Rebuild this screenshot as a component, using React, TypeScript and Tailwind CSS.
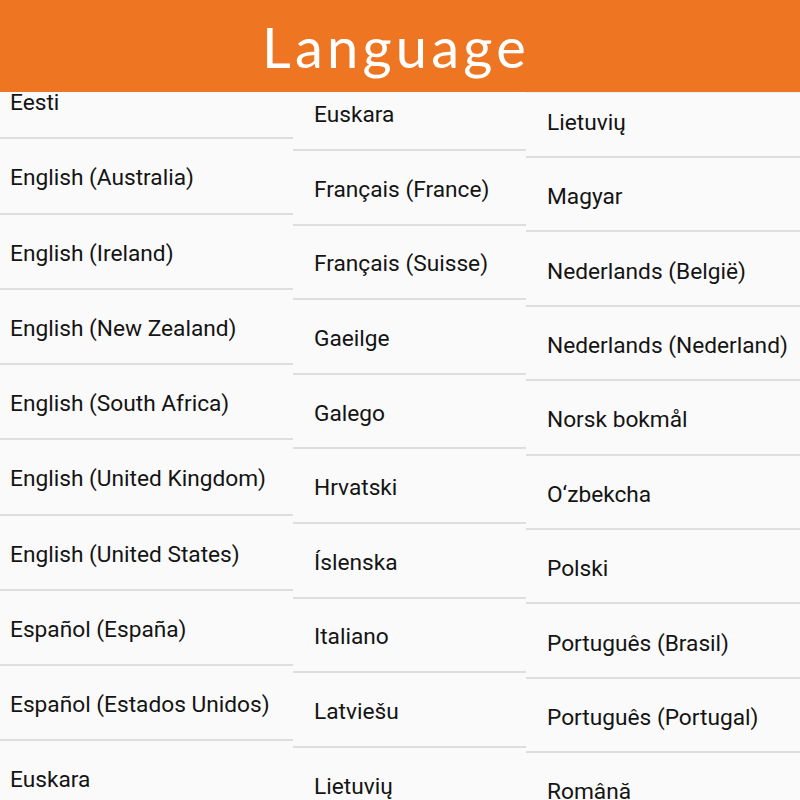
const col1 = [
  "Eesti",
  "English (Australia)",
  "English (Ireland)",
  "English (New Zealand)",
  "English (South Africa)",
  "English (United Kingdom)",
  "English (United States)",
  "Español (España)",
  "Español (Estados Unidos)",
  "Euskara",
];

const col2 = [
  "Euskara",
  "Français (France)",
  "Français (Suisse)",
  "Gaeilge",
  "Galego",
  "Hrvatski",
  "Íslenska",
  "Italiano",
  "Latviešu",
  "Lietuvių",
];

const col3 = [
  "Lietuvių",
  "Magyar",
  "Nederlands (België)",
  "Nederlands (Nederland)",
  "Norsk bokmål",
  "O‘zbekcha",
  "Polski",
  "Português (Brasil)",
  "Português (Portugal)",
  "Română",
];

export default function App() {
  return (
    <div className="w-[800px] h-[800px] overflow-hidden flex flex-col bg-[#fafafa] font-['Roboto',sans-serif] text-[#141414]">
      <div className="h-[92px] shrink-0 bg-[#ee7623] flex items-center justify-center">
        <h1 className="font-['Lato',sans-serif] text-white text-[56px] leading-none tracking-[4.2px] pr-[8px] pt-[2px]">
          Language
        </h1>
      </div>
      <div className="flex flex-1 overflow-hidden">
        <div className="w-[293px] overflow-hidden">
          <div className="-mt-[28px]">
            {col1.map((name) => (
              <div
                key={name}
                className="h-[75.25px] pl-[10px] pt-[5px] flex items-center border-b-2 border-[#dedede] text-[22.7px]"
              >
                {name}
              </div>
            ))}
          </div>
        </div>
        <div className="w-[233px] overflow-hidden">
          <div className="-mt-[15.6px]">
            {col2.map((name) => (
              <div
                key={name}
                className="h-[74.6px] pl-[21px] pt-[5px] flex items-center border-b-2 border-[#dedede] text-[22.7px]"
              >
                {name}
              </div>
            ))}
          </div>
        </div>
        <div className="flex-1 overflow-hidden border-t border-[#e4eef0]">
          <div className="-mt-[9.4px]">
            {col3.map((name) => (
              <div
                key={name}
                className="h-[74.4px] pl-[21px] pt-[6px] flex items-center border-b-2 border-[#dedede] text-[22.7px]"
              >
                {name}
              </div>
            ))}
          </div>
        </div>
      </div>
    </div>
  );
}
